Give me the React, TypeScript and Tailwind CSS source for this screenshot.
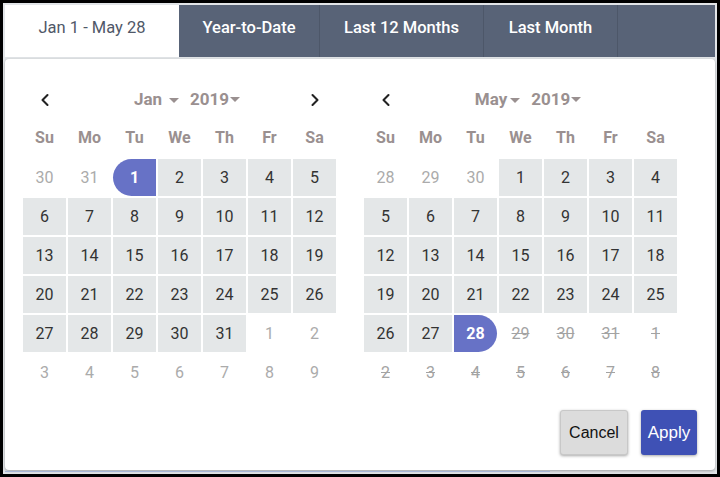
import { ChevronLeft, ChevronRight } from 'lucide-react';

type Kind = 'out' | 'in' | 'start' | 'end' | 'off';
type Day = { n: number; k: Kind };

const WEEK = ['Su', 'Mo', 'Tu', 'We', 'Th', 'Fr', 'Sa'];

const mk = (nums: number[], kinds: Kind[]): Day[] => nums.map((n, i) => ({ n, k: kinds[i] }));

const range = (a: number, b: number) => Array.from({ length: b - a + 1 }, (_, i) => a + i);

const janDays: Day[] = [
    ...mk([30, 31], ['out', 'out']),
    { n: 1, k: 'start' },
    ...range(2, 31).map((n) => ({ n, k: 'in' as Kind })),
    ...range(1, 9).map((n) => ({ n, k: 'out' as Kind })),
];

const mayDays: Day[] = [
    ...mk([28, 29, 30], ['out', 'out', 'out']),
    ...range(1, 27).map((n) => ({ n, k: 'in' as Kind })),
    { n: 28, k: 'end' },
    ...range(29, 31).map((n) => ({ n, k: 'off' as Kind })),
    ...range(1, 8).map((n) => ({ n, k: 'off' as Kind })),
];

const Caret = () => <span className="inline-block w-0 h-0 border-l-[5px] border-r-[5px] border-t-[5px] border-l-transparent border-r-transparent border-t-[#9a9090]" />;

const cellClass = (k: Kind) => {
    switch (k) {
        case 'in':
            return 'bg-[#e4e7e8] text-[#333]';
        case 'start':
            return 'bg-[#6772c6] text-white font-bold rounded-l-[19px]';
        case 'end':
            return 'bg-[#6772c6] text-white font-bold rounded-r-[19px]';
        case 'off':
            return 'text-[#a3a3a3] line-through';
        default:
            return 'text-[#ababab]';
    }
};

interface CalProps {
    month: string;
    days: Day[];
    showNext: boolean;
    monthGap: string;
}

const Calendar = ({ month, days, showNext, monthGap }: CalProps) => {
    return (
        <div className="w-[313px]">
            <div className="flex items-center h-[38px] pt-[2px]">
                <div className="w-[43px] flex justify-center text-[#222]">
                    <ChevronLeft size={20} strokeWidth={2.5} />
                </div>
                <div className="flex-1 flex justify-center items-center pl-[15px] font-bold text-[17px] text-[#9a9090]">
                    <span>{month}</span>
                    <span className={monthGap}>
                        <Caret />
                    </span>
                    <span className="ml-[11px]">2019</span>
                    <span className="ml-[1px] -mt-[2px] flex">
                        <Caret />
                    </span>
                </div>
                <div className="w-[43px] flex justify-center text-[#222]">{showNext && <ChevronRight size={20} strokeWidth={2.5} />}</div>
            </div>
            <div className="grid grid-cols-7 gap-x-[2px] h-[38px] items-center pt-[2px]">
                {WEEK.map((w) => (
                    <div key={w} className="text-center font-bold text-[16px] text-[#9a9090]">
                        {w}
                    </div>
                ))}
            </div>
            <div className="grid grid-cols-7 gap-[2px] mt-[3px]">
                {days.map((d, i) => (
                    <div key={i} className={`h-[37px] flex items-center justify-center text-[16px] ${cellClass(d.k)}`}>
                        {d.n}
                    </div>
                ))}
            </div>
        </div>
    );
};

const App = () => {
    return (
        <div className="w-[720px] h-[477px] bg-black pt-[3px] pl-[3px] pr-[3px] pb-[3px]" style={{ fontFamily: 'Roboto, "Noto Sans", sans-serif' }}>
            <div className="w-full h-full bg-[#e2e5e8] p-[2px] flex flex-col">
                <div className="flex h-[52px] shrink-0 text-[16.5px]">
                    <div className="w-[174px] bg-white flex items-center justify-center pb-[5px] text-[#505868]">Jan 1 - May 28</div>
                    <div className="w-[141px] bg-[#586377] flex items-center justify-center pb-[5px] font-medium text-white border-r border-[#4d5769]">Year-to-Date</div>
                    <div className="w-[164px] bg-[#586377] flex items-center justify-center pb-[5px] font-medium text-white border-r border-[#4d5769]">Last 12 Months</div>
                    <div className="w-[134px] bg-[#586377] flex items-center justify-center pb-[5px] font-medium text-white border-r border-[#4d5769]">Last Month</div>
                    <div className="flex-1 bg-[#586377]" />
                </div>
                <div className="mt-[2px] h-[412px] bg-white rounded-[4px] shadow-[0_1px_3px_rgba(0,0,0,0.3)] pt-[21px] pl-[18px] pr-[18px] flex flex-col">
                    <div className="flex gap-[28px]">
                        <Calendar month="Jan" days={janDays} showNext={true} monthGap="ml-[7px] flex" />
                        <Calendar month="May" days={mayDays} showNext={false} monthGap="ml-[3px] flex" />
                    </div>
                    <div className="flex justify-end gap-[13px] mt-[19px]" style={{ fontFamily: '"Liberation Sans", Arial, sans-serif' }}>
                        <button className="w-[68px] h-[45px] bg-[#dcdcdc] border border-[#c8c8c8] rounded-[3px] shadow-[0_1px_3px_rgba(0,0,0,0.35)] text-[16px] text-[#111]">Cancel</button>
                        <button className="w-[56px] h-[45px] bg-[#3f51b5] rounded-[3px] shadow-[0_1px_3px_rgba(0,0,0,0.35)] text-[17px] text-white">Apply</button>
                    </div>
                </div>
                <div className="mt-[1px] h-[1px] w-[545px] bg-[#a7b7d6]" />
            </div>
        </div>
    );
};

export default App;
